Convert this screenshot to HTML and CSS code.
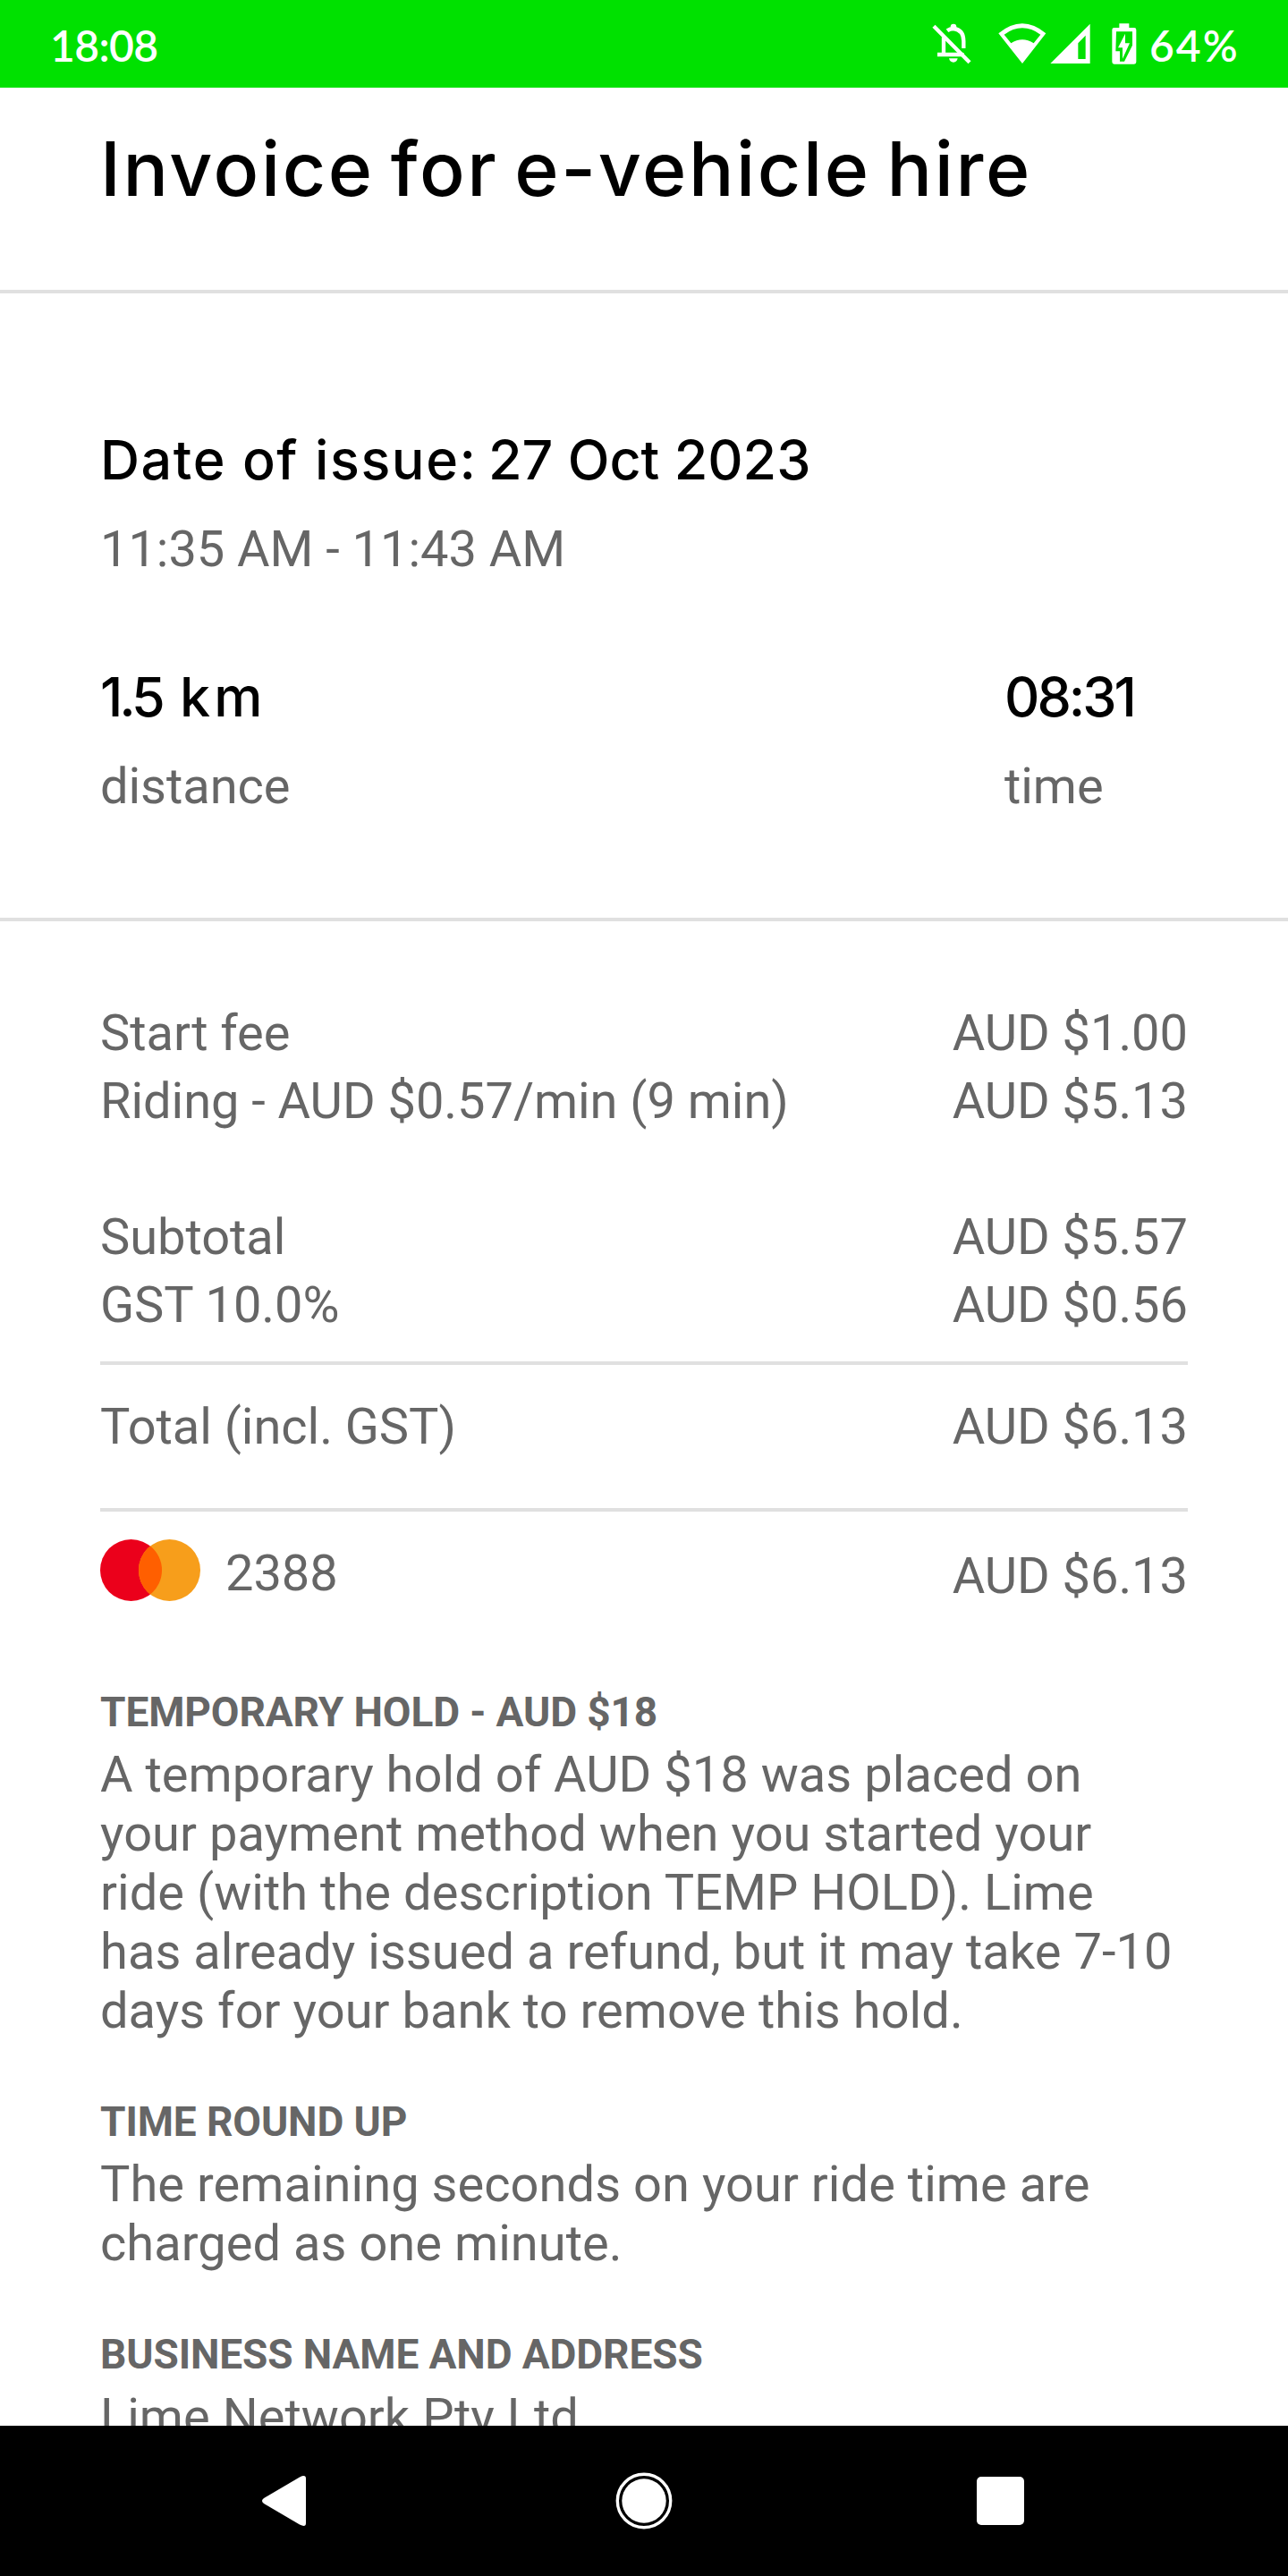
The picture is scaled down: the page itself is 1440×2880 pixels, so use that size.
FILE: index.html
```html
<!DOCTYPE html>
<html lang="en">
<head>
<meta charset="utf-8">
<title>Invoice for e-vehicle hire</title>
<link rel="stylesheet" href="styles.css">
</head>
<body>
<div class="screen">
  <header class="status">
    <span class="clock">18:08</span>
    <div class="indicators">
      <svg class="bell" viewBox="68 80 132 138" width="44" height="46" fill="none">
        <path d="M119 105Q128 98 140 98Q174 102 174 140V164" stroke="#fff" stroke-width="13"/>
        <circle cx="140" cy="92" r="10" fill="#fff"/>
        <path d="M107 127V184M86 185H176" stroke="#fff" stroke-width="13"/>
        <path d="M125 198H154Q151 211 140 211Q128 211 125 198Z" fill="#fff"/>
        <path d="M82 82L202 203" stroke="#00e100" stroke-width="7"/>
        <path d="M74 90L194 211" stroke="#fff" stroke-width="13"/>
      </svg>
      <svg class="wifi" viewBox="290 78 161 138" width="53.67" height="46">
        <path fill="#fff" fill-rule="evenodd" d="M291 112Q371 46 450 112L371 213ZM310 116L333 145Q371 121 409 145L432 116Q371 72 310 116Z"/>
      </svg>
      <svg class="signal" viewBox="463 78 135 138" width="45" height="46">
        <path fill="#fff" fill-rule="evenodd" d="M464 213L597 80V213ZM557 145V198H582V119Z"/>
      </svg>
      <svg class="battery" viewBox="671 78 84 138" width="28" height="46">
        <path fill="#fff" d="M696 79H729V93H746Q753 93 753 100V208Q753 215 746 215H679Q672 215 672 208V100Q672 93 679 93H696Z"/>
        <path fill="#00e100" d="M686 106H740V152L713 206H698V172H684Z"/>
        <path fill="#fff" d="M716 113V145H731L707 197V160H692Z"/>
      </svg>
      <span class="percent">64%</span>
    </div>
  </header>

  <main class="invoice">
    <section class="head">
      <h1 class="title">Invoice for e-vehicle hire</h1>
    </section>

    <section class="trip">
      <h2 class="strong date"><span class="date-label">Date of issue:</span> 27 Oct 2023</h2>
      <p class="text label">11:35 AM - 11:43 AM</p>
      <div class="stats">
        <div class="stat">
          <p class="strong"><span class="distance-value">1.5</span> <span class="distance-unit">km</span></p>
          <p class="text label">distance</p>
        </div>
        <div class="stat stat-time">
          <p class="strong duration">08:31</p>
          <p class="text label">time</p>
        </div>
      </div>
    </section>

    <section class="charges">
      <div class="text row"><span>Start fee</span><span>AUD $1.00</span></div>
      <div class="text row"><span>Riding - AUD $0.57/min (9 min)</span><span>AUD $5.13</span></div>
      <div class="text row subtotal"><span>Subtotal</span><span>AUD $5.57</span></div>
      <div class="text row"><span>GST 10.0%</span><span>AUD $0.56</span></div>
      <div class="text row total"><span>Total (incl. GST)</span><span>AUD $6.13</span></div>
      <div class="text row payment">
        <div class="card">
          <svg viewBox="0 0 112 69" width="112" height="69">
            <circle cx="34.5" cy="34.5" r="34.5" fill="#eb001b"/>
            <circle cx="77.5" cy="34.5" r="34.5" fill="#f79e1b"/>
            <path fill="#ff5f00" d="M56 7.5A34.5 34.5 0 0 1 56 61.5A34.5 34.5 0 0 1 56 7.5Z"/>
          </svg>
          <span>2388</span>
        </div>
        <span class="paid">AUD $6.13</span>
      </div>
    </section>

    <section class="notes">
      <article>
        <h3 class="note-title">TEMPORARY HOLD - AUD $18</h3>
        <p class="note">A temporary hold of AUD $18 was placed on<br>your payment method when you started your<br>ride (with the description TEMP HOLD). Lime<br>has already issued a refund, but it may take 7-10<br>days for your bank to remove this hold.</p>
      </article>
      <article>
        <h3 class="note-title">TIME ROUND UP</h3>
        <p class="note">The remaining seconds on your ride time are<br>charged as one minute.</p>
      </article>
      <article>
        <h3 class="note-title">BUSINESS NAME AND ADDRESS</h3>
        <p class="note">Lime Network Pty Ltd</p>
      </article>
    </section>
  </main>

  <nav class="navbar">
    <svg viewBox="0 0 60 60" width="60" height="60"><path fill="#fff" d="M5 27L45 3.500Q52 0 52 5V55Q52 60 45 56.500L5 33Q1 30 5 27Z"/></svg>
    <svg viewBox="0 0 64 64" width="64" height="64"><circle cx="32" cy="32" r="29.700" fill="none" stroke="#fff" stroke-width="3.400"/><circle cx="32" cy="32" r="24.700" fill="#fff"/></svg>
    <svg viewBox="0 0 60 60" width="60" height="60"><rect x="3" y="3" width="53" height="54" rx="5" fill="#fff"/></svg>
  </nav>
</div>
</body>
</html>
```
FILE: styles.css
```css
* { box-sizing: border-box; }

body, h1, h2, h3, p { margin: 0; }

body { background: #fff; }

svg { display: block; flex: none; }

.screen {
  display: flex;
  flex-direction: column;
  width: 1440px;
  height: 2880px;
  overflow: hidden;
  color: #666;
  font-family: Roboto, "Liberation Sans", sans-serif;
}

.status {
  display: flex;
  flex: none;
  justify-content: space-between;
  height: 98px;
  padding: 0 56px 0 56px;
  background: #00e100;
  color: #fff;
  font: 600 48px/102px Lato, sans-serif;
}

.clock { letter-spacing: -0.6px; }

.indicators { display: flex; }
.indicators svg { margin-top: 26px; }
.wifi { margin-left: 30px; }
.signal { margin-left: 4px; }
.battery { margin-left: 24px; }
.percent {
  width: 99px;
  margin-left: 14px;
  letter-spacing: 2px;
  white-space: nowrap;
}

.invoice {
  flex: 1;
  min-height: 0;
  overflow: hidden;
}

.head {
  padding: 41px 112px 85px;
  border-bottom: 4px solid #e0e0e0;
}

.title {
  color: #000;
  font: 500 84px/100px Inter, sans-serif;
  letter-spacing: 2.6px;
  word-spacing: -7px;
  white-space: nowrap;
}

.trip {
  padding: 146px 112px 109px;
  border-bottom: 4px solid #e0e0e0;
}

.strong {
  color: #000;
  font: 500 61px/80px Inter, sans-serif;
  white-space: nowrap;
}

.date-label {
  margin-right: -4px;
  letter-spacing: 1.6px;
}

.distance-value { letter-spacing: -4px; }
.distance-unit {
  margin-left: 4px;
  letter-spacing: 4px;
}
.duration { letter-spacing: -3px; }

.text {
  font-size: 56px;
  line-height: 76px;
  letter-spacing: -0.04px;
  white-space: nowrap;
}

.label { margin-top: 22px; }

.stats {
  display: flex;
  justify-content: space-between;
  margin-top: 87px;
}

.stat-time { width: 205px; }

.charges { padding: 87px 112px; }

.row {
  display: flex;
  justify-content: space-between;
}

.subtotal { margin-top: 76px; }

.total {
  margin-top: 25px;
  padding: 31px 0 53px;
  border-top: 4px solid #e0e0e0;
  border-bottom: 4px solid #e0e0e0;
}

.payment {
  align-items: flex-start;
  padding-top: 31px;
}

.card {
  display: flex;
  align-items: flex-start;
  gap: 28px;
}

.paid { margin-top: 3px; }

.notes {
  display: flex;
  flex-direction: column;
  gap: 64px;
  padding: 0 112px;
}

.note-title {
  font-size: 46px;
  font-weight: 700;
  line-height: 54px;
  letter-spacing: -0.12px;
}

.note {
  margin-top: 10px;
  font-size: 56px;
  line-height: 66px;
  letter-spacing: 0.04px;
  white-space: nowrap;
}

.navbar {
  display: flex;
  flex: none;
  align-items: center;
  justify-content: space-between;
  height: 168px;
  padding: 0 291px 0 290px;
  background: #000;
}
```
